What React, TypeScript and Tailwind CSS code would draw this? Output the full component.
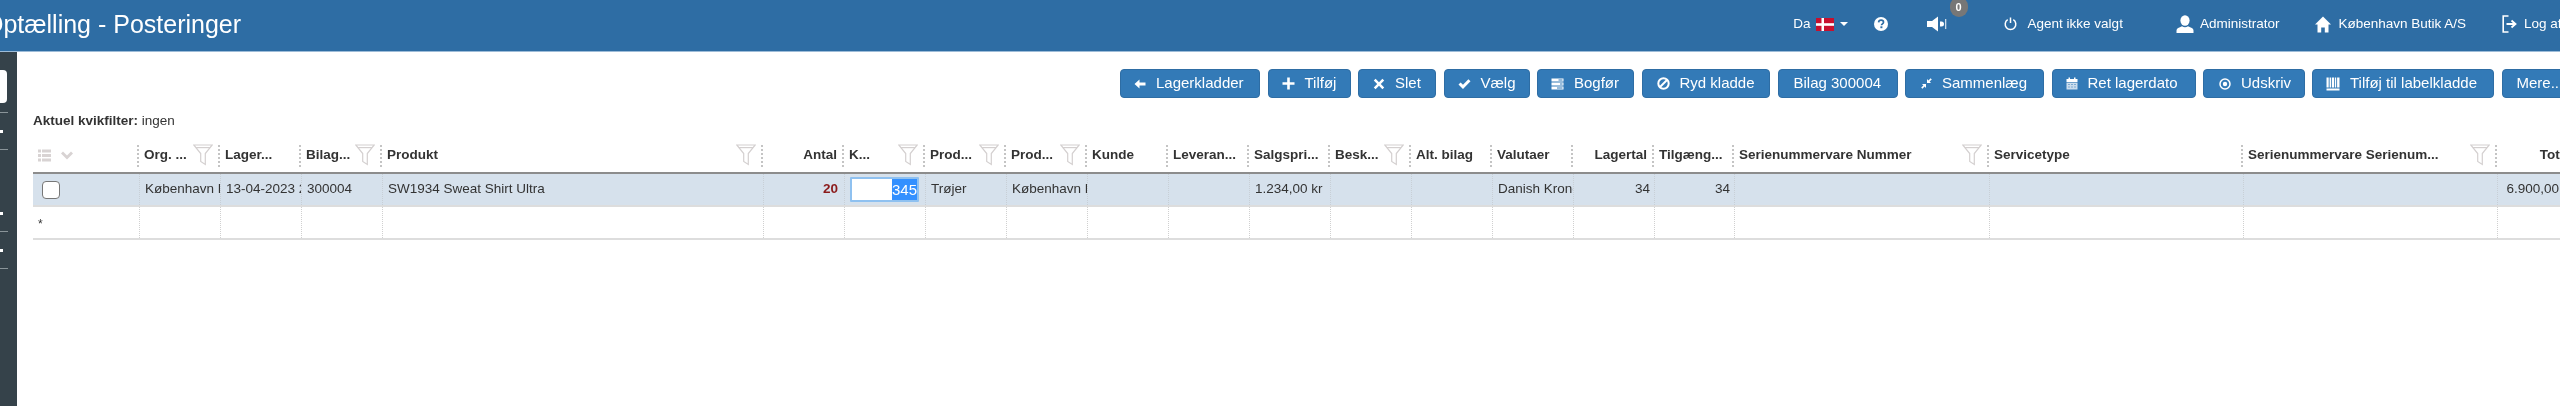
import React from "react";

const W = { fill: "white" };
const ArrowLeft = () => <svg width="12" height="12" viewBox="0 0 12 12" {...W}><path d="M0.5 6 5.5 1.5V4.4H11.5V7.6H5.5V10.5z" /></svg>;
const Plus = () => <svg width="13" height="13" viewBox="0 0 13 13" {...W}><path d="M5.2 0.5h2.6v4.7h4.7v2.6H7.8v4.7H5.2V7.8H0.5V5.2h4.7z" /></svg>;
const Cross = () => <svg width="12" height="12" viewBox="0 0 12 12" {...W}><path d="M2.6 0.8 6 4.2 9.4 0.8l1.8 1.8L7.8 6l3.4 3.4-1.8 1.8L6 7.8l-3.4 3.4-1.8-1.8L4.2 6 0.8 2.6z" /></svg>;
const Check = () => <svg width="13" height="12" viewBox="0 0 13 12" {...W}><path d="M0.5 6.5 2.6 4.4 5 6.8 10.4 1.2 12.5 3.3 5 11z" /></svg>;
const Tasks = () => <svg width="13" height="12" viewBox="0 0 13 12" {...W}><path d="M0.5 0.5h12v3h-12zM0.5 4.5h12v3h-12zM0.5 8.5h12v3h-12z" /><path d="M7.5 1.5h4v1h-4zM9 5.5h2.5v1H9zM6 9.5h5.5v1H6z" fill="#337ab7" /></svg>;
const Ban = () => <svg width="13" height="13" viewBox="0 0 13 13" fill="none" stroke="white" strokeWidth="2"><circle cx="6.5" cy="6.5" r="5.2" /><path d="M3 10 10 3" /></svg>;
const Merge = () => <svg width="11" height="11" viewBox="0 0 11 11" {...W}><path d="M6 1v4h4L8.6 3.6 10.8 1.4 9.6 0.2 7.4 2.4zM5 10V6H1l1.4 1.4L0.2 9.6l1.2 1.2L3.6 8.6z" /></svg>;
const Calendar = () => <svg width="12" height="13" viewBox="0 0 12 13" {...W}><path d="M0.5 2h11v3h-11zM2.5 0.5h1.5v2H2.5zM8 0.5h1.5v2H8z" /><path d="M0.5 5.6h11V12.5h-11z" opacity=".75" /><path d="M2.5 7h1v1h-1zM5.5 7h1v1h-1zM8.5 7h1v1h-1zM2.5 9.5h1v1h-1zM5.5 9.5h1v1h-1zM8.5 9.5h1v1h-1z" fill="#337ab7" /></svg>;
const RecordIcon = () => <svg width="12" height="12" viewBox="0 0 12 12" fill="none" stroke="white" strokeWidth="1.5"><circle cx="6" cy="6" r="5" /><circle cx="6" cy="6" r="2.2" fill="white" stroke="none" /></svg>;
const Books = () => <svg width="14" height="14" viewBox="0 0 14 14" {...W}><path d="M0.5 0.5h2.2v10h-2.2zM3.6 0.5h1.4v10h-1.4zM5.8 0.5h2.2v10h-2.2zM8.8 0.5h1.4v10h-1.4zM11.1 0.5h2.4v10h-2.4zM0.5 11.5h13v2h-13z" /></svg>;
const Question = () => (
  <svg width="14" height="14" viewBox="0 0 14 14">
    <circle cx="7" cy="7" r="7" fill="white" />
    <path d="M4.6 5.4C4.7 3.9 5.7 3.2 7.1 3.2c1.4 0 2.4 0.8 2.4 2 0 1.7-2 1.6-2 3.1" fill="none" stroke="#2e6da4" strokeWidth="1.7" />
    <rect x="6.4" y="9.3" width="2" height="1.9" fill="#2e6da4" />
  </svg>
);
const Sound = () => <svg width="22" height="16" viewBox="0 0 22 16" {...W}><path d="M0 5h5L11 0.5v15L5 11H0z" /><path d="M13 5.5h1.5a2.5 2.5 0 0 1 0 5H13z" /><rect x="18" y="3" width="1.3" height="10" opacity=".75" /></svg>;
const Power = () => <svg width="13" height="14" viewBox="0 0 13 14" fill="none" stroke="white" strokeWidth="1.5"><path d="M3.7 2.7a5.3 5.3 0 1 0 5.6 0" /><path d="M6.5 0.5v5.5" /></svg>;
const UserIcon = () => <svg width="18" height="18" viewBox="0 0 18 18" {...W}><ellipse cx="9" cy="5.5" rx="4.6" ry="5.2" /><path d="M0.5 18v-2.5c0-2 2.5-3 5.5-4.2 1.8 1.3 4.2 1.3 6 0 3 1.2 5.5 2.2 5.5 4.2V18z" /></svg>;
const Home = () => <svg width="16" height="17" viewBox="0 0 16 17" {...W}><path d="M8 0.5 16 8.5h-2.5V16.5H9.8V11.5H6.2V16.5H2.5V8.5H0z" /></svg>;
const Logout = () => <svg width="17" height="18" viewBox="0 0 17 18" fill="none" stroke="white"><path d="M6.5 1H1.2v16h5.3" strokeWidth="1.6" /><path d="M4.5 9h8M9.5 5.5 13.5 9l-4 3.5" strokeWidth="1.8" /></svg>;
const ListIcon = () => <svg width="13" height="13" viewBox="0 0 13 13" fill="#d8d3d3"><path d="M0 0.5h3v3H0zM4 0.5h9v3H4zM0 5h3v3H0zM4 5h9v3H4zM0 9.5h3v3H0zM4 9.5h9v3H4z" /></svg>;
const Chevron = () => <svg width="12" height="10" viewBox="0 0 12 10" fill="#d8d3d3"><path d="M0 2.5 2 0.5 6 4.5 10 0.5 12 2.5 6 8.5z" /></svg>;
const F = () => <svg width="20" height="22" viewBox="0 0 20 22" fill="none" stroke="#d4d0d0" strokeWidth="1.2" className="mt-[-2px] shrink-0"><path d="M0.8 1H19.2L12.3 9.5V20.5L7.7 17.5V9.5z" /><path d="M3 3.6H17" /></svg>;

function Btn({ icon, children, className = "" }: { icon?: React.ReactNode; children: React.ReactNode; className?: string }) {
  return (
    <div className={`flex h-[29px] shrink-0 items-center gap-[10px] rounded-[4px] border border-[#2e6da4] bg-[#337ab7] text-[15px] text-white ${className}`}>
      {icon}
      <span>{children}</span>
    </div>
  );
}

const cols = [
  { label: "" },
  { label: "Org. ...", f: true },
  { label: "Lager..." },
  { label: "Bilag...", f: true },
  { label: "Produkt", f: true },
  { label: "Antal", r: true },
  { label: "K...", f: true },
  { label: "Prod...", f: true },
  { label: "Prod...", f: true },
  { label: "Kunde" },
  { label: "Leveran..." },
  { label: "Salgspri..." },
  { label: "Besk...", f: true },
  { label: "Alt. bilag" },
  { label: "Valutaer" },
  { label: "Lagertal", r: true },
  { label: "Tilgæng..." },
  { label: "Serienummervare Nummer", f: true },
  { label: "Servicetype" },
  { label: "Serienummervare Serienum...", f: true },
  { label: "Total", r: true },
] as { label: string; f?: boolean; r?: boolean }[];

const GRID = "grid grid-cols-[106px_81px_81px_81px_381px_81px_81px_81px_81px_81px_81px_81px_81px_81px_81px_81px_80px_255px_254px_254px_81px]";

const row1: (string | null)[] = [
  "København Butik A/S", "13-04-2023 21:00", "300004", "SW1934 Sweat Shirt Ultra", null, null, "Trøjer", "København Butik A/S", "", "", "1.234,00 kr", "", "", "Danish Krone", "34", "34", "", "", "", "6.900,00 kr",
];

export default function App() {
  return (
    <div className="h-[406px] w-[2560px] overflow-hidden bg-white font-['Liberation_Sans',Arial,sans-serif] text-[13.5px] text-[#333] blur-[0.4px]">
      <header className="flex h-[52px] items-center border-b border-[#9dbcd8] bg-[#2e6da4] text-white">
        <h1 className="ml-[-16px] mt-[-2px] text-[25px] leading-none font-normal whitespace-nowrap">Optælling - Posteringer</h1>
        <div className="ml-auto mt-[-3px] flex items-center">
          <span>Da</span>
          <svg width="18" height="13" viewBox="0 0 18 13" className="ml-[5px]"><rect width="18" height="13" fill="#c8102e" /><rect x="5.5" width="2.5" height="13" fill="#fff" /><rect y="5.2" width="18" height="2.6" fill="#fff" /></svg>
          <span className="ml-[6px] h-0 w-0 border-x-[4px] border-t-[4px] border-x-transparent border-t-white" />
          <span className="ml-[26px] flex"><Question /></span>
          <div className="relative ml-[39px] flex">
            <Sound />
            <span className="absolute left-[23px] top-[-19px] flex h-[20px] w-[18px] items-center justify-center rounded-full bg-[#777] text-[11px] font-bold">0</span>
          </div>
          <span className="ml-[55px] flex"><Power /></span>
          <span className="ml-[11px]">Agent ikke valgt</span>
          <span className="ml-[53px] flex"><UserIcon /></span>
          <span className="ml-[6px]">Administrator</span>
          <span className="ml-[36px] flex"><Home /></span>
          <span className="ml-[7px]">København Butik A/S</span>
          <span className="ml-[36px] flex"><Logout /></span>
          <span className="ml-[5px] mr-[-4px] w-[40px] overflow-hidden whitespace-nowrap">Log af</span>
        </div>
      </header>
      <div className="flex h-[354px]">
        <aside className="flex w-[17px] shrink-0 flex-col bg-[#35424a]">
          <div className="mt-[18px] h-[33px] w-[7px] rounded-r-[4px] bg-white" />
          <div className="mt-[9px] h-px w-[8px] bg-[#8a9499]" />
          <span className="mt-[17px] h-[3px] w-[3px] bg-white" />
          <div className="mt-[16px] h-px w-[8px] bg-[#8a9499]" />
          <span className="mt-[62px] h-[3px] w-[3px] bg-white" />
          <div className="mt-[16px] h-px w-[8px] bg-[#8a9499]" />
          <span className="mt-[17px] h-[3px] w-[3px] bg-white" />
          <div className="mt-[16px] h-px w-[8px] bg-[#8a9499]" />
        </aside>
        <main className="min-w-0 flex-1">
          <div className="ml-[1103px] mt-[17px] flex w-[1500px] gap-[7.5px]">
            <Btn className="w-[140px] pl-[13px]" icon={<ArrowLeft />}>Lagerkladder</Btn>
            <Btn className="w-[83px] pl-[13px]" icon={<Plus />}>Tilføj</Btn>
            <Btn className="w-[78px] pl-[14px]" icon={<Cross />}>Slet</Btn>
            <Btn className="w-[86px] pl-[13px]" icon={<Check />}>Vælg</Btn>
            <Btn className="w-[97px] pl-[13px]" icon={<Tasks />}>Bogfør</Btn>
            <Btn className="w-[128.5px] pl-[14px]" icon={<Ban />}>Ryd kladde</Btn>
            <Btn className="w-[120px] pl-[15px]">Bilag 300004</Btn>
            <Btn className="w-[139px] pl-[15px]" icon={<Merge />}>Sammenlæg</Btn>
            <Btn className="w-[144px] pl-[13px]" icon={<Calendar />}>Ret lagerdato</Btn>
            <Btn className="w-[101.5px] pl-[15px]" icon={<RecordIcon />}>Udskriv</Btn>
            <Btn className="w-[182px] pl-[13px]" icon={<Books />}>Tilføj til labelkladde</Btn>
            <Btn className="w-[90px] pl-[14px]">Mere...</Btn>
          </div>
          <p className="ml-[16px] mt-[15px] leading-[16px]"><b>Aktuel kvikfilter:</b> ingen</p>
          <div className="ml-[16px] mt-[10px] w-[2545px]">
            <div className={`${GRID} h-[35px] items-center border-b-2 border-[#8c8c8c] font-bold`}>
              {cols.map((c, i) =>
                i === 0 ? (
                  <div key={i} className="flex items-center gap-[10px] pl-[5px]">
                    <ListIcon />
                    <Chevron />
                  </div>
                ) : (
                  <div key={i} className={`ml-[-2px] mr-[2px] flex h-[22px] items-center border-l-2 border-dotted border-[#c4c4c4] pl-[5px] pr-[5px] whitespace-nowrap ${c.r ? "justify-end" : "justify-between"}`}>
                    <span>{c.label}</span>
                    {c.f && <F />}
                  </div>
                )
              )}
            </div>
            <div className={`${GRID} h-[33px] items-stretch border-b-2 border-[#dddddd] bg-[#d6e1ec]`}>
              <div className="flex items-center pl-[9px]"><span className="h-[18px] w-[18px] rounded-[4px] border border-[#777] bg-white" /></div>
              {row1.map((t, i) => {
                if (i === 4)
                  return <div key={i} className="flex items-center justify-end border-l border-dotted border-[#c8cfd6] pr-[6px] font-bold text-[#8b1a1a]">20</div>;
                if (i === 5)
                  return (
                    <div key={i} className="flex items-center border-l border-dotted border-[#c8cfd6] pl-[5px] pr-[6px]">
                      <div className="flex h-[25px] w-full justify-end rounded-[1px] border-2 border-[#8fc1f0] bg-white text-right text-[15px] leading-[21px]"><span className="bg-[#3390ff] text-white">345</span></div>
                    </div>
                  );
                const right = i === 14 || i === 15 || i === 19;
                return (
                  <div key={i} className={`flex items-center overflow-hidden whitespace-nowrap border-l border-dotted border-[#c8cfd6] pl-[5px] ${right ? "justify-end pr-[4px]" : ""}`}>{t}</div>
                );
              })}
            </div>
            <div className={`${GRID} h-[33px] border-b-2 border-[#dddddd]`}>
              <div className="pl-[5px] pt-[8px] text-[12px]">*</div>
              {row1.map((_, i) => <div key={i} className="border-l border-dotted border-[#d0d0d0]" />)}
            </div>
          </div>
        </main>
      </div>
    </div>
  );
}
